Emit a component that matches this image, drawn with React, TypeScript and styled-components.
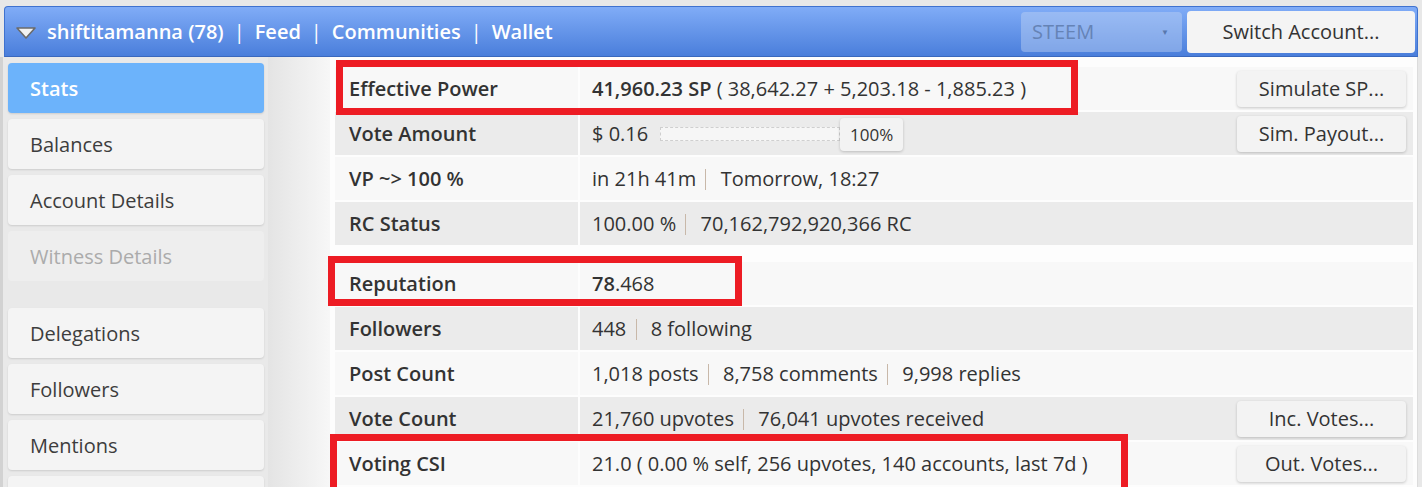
import styled, { createGlobalStyle } from 'styled-components'

const GlobalStyle = createGlobalStyle`
  html, body {
    margin: 0;
    padding: 0;
    background: #e8e8e8;
    font-family: "Open Sans", "Liberation Sans", sans-serif;
  }
  * { box-sizing: border-box; }
`

type StatRow = {
  label: string
  value: React.ReactNode
  action?: string
}

const navLinks = ['Feed', 'Communities', 'Wallet']

const menu = [
  { label: 'Stats', active: true },
  { label: 'Balances' },
  { label: 'Account Details' },
  { label: 'Witness Details', disabled: true },
  { spacer: true, label: '' },
  { label: 'Delegations' },
  { label: 'Followers' },
  { label: 'Mentions' },
  { label: '' },
]

function Sep() {
  return <Pipe />
}

function getTopRows(): StatRow[] {
  return [
    {
      label: 'Effective Power',
      value: (
        <span>
          <Strong>41,960.23 SP</Strong> ( 38,642.27 + 5,203.18 - 1,885.23 )
        </span>
      ),
      action: 'Simulate SP...',
    },
    {
      label: 'Vote Amount',
      value: (
        <VoteWrap>
          <span>$ 0.16</span>
          <Track>
            <Handle>100%</Handle>
          </Track>
        </VoteWrap>
      ),
      action: 'Sim. Payout...',
    },
    {
      label: 'VP ~> 100 %',
      value: (
        <span>
          in 21h 41m <Sep /> Tomorrow, 18:27
        </span>
      ),
    },
    {
      label: 'RC Status',
      value: (
        <span>
          100.00 % <Sep /> 70,162,792,920,366 RC
        </span>
      ),
    },
  ]
}

function getBottomRows(): StatRow[] {
  return [
    {
      label: 'Reputation',
      value: (
        <span>
          <Strong>78</Strong>.468
        </span>
      ),
    },
    {
      label: 'Followers',
      value: (
        <span>
          448 <Sep /> 8 following
        </span>
      ),
    },
    {
      label: 'Post Count',
      value: (
        <span>
          1,018 posts <Sep /> 8,758 comments <Sep /> 9,998 replies
        </span>
      ),
    },
    {
      label: 'Vote Count',
      value: (
        <span>
          21,760 upvotes <Sep /> 76,041 upvotes received
        </span>
      ),
      action: 'Inc. Votes...',
    },
    {
      label: 'Voting CSI',
      value: <span>21.0 ( 0.00 % self, 256 upvotes, 140 accounts, last 7d )</span>,
      action: 'Out. Votes...',
    },
  ]
}

function Rows({ rows }: { rows: StatRow[] }) {
  return (
    <>
      {rows.map((row, i) => (
        <Row key={row.label}>
          <LabelCell $alt={i % 2 === 1}>{row.label}</LabelCell>
          <ValueCell $alt={i % 2 === 1}>
            {row.value}
            {row.action && <ActionButton type="button">{row.action}</ActionButton>}
          </ValueCell>
        </Row>
      ))}
    </>
  )
}

export default function App() {
  return (
    <Page>
      <GlobalStyle />
      <Header>
        <Caret width="22" height="14" viewBox="0 0 22 14">
          <path d="M2 2 H20 L11 12 Z" fill="#f2f2f2" stroke="#6b6b6b" strokeWidth="1.6" strokeLinejoin="round" />
        </Caret>
        <NavLink>shiftitamanna (78)</NavLink>
        {navLinks.map((link) => (
          <NavItem key={link}>
            <NavPipe>|</NavPipe>
            <NavLink>{link}</NavLink>
          </NavItem>
        ))}
        <ChainSelect>
          <span>STEEM</span>
          <SelectArrow>▼</SelectArrow>
        </ChainSelect>
        <SwitchButton type="button">Switch Account...</SwitchButton>
      </Header>
      <Body>
        <Sidebar>
          {menu.map((item, i) =>
            item.spacer ? (
              <MenuSpacer key={i} />
            ) : (
              <MenuItem key={i} $active={item.active} $disabled={item.disabled}>
                {item.label}
              </MenuItem>
            ),
          )}
        </Sidebar>
        <Main>
          <Table>
            <Rows rows={getTopRows()} />
            <Spacer />
            <Rows rows={getBottomRows()} />
          </Table>
        </Main>
      </Body>
      <Marker $left={336} $top={60} $width={742} $height={55} />
      <Marker $left={328} $top={256} $width={414} $height={50} />
      <Marker $left={330} $top={434} $width={798} $height={60} />
    </Page>
  )
}

const Page = styled.div`
  position: relative;
  width: 1422px;
  height: 487px;
  overflow: hidden;
  padding-top: 6px;
  background: #e8e8e8;
`

const Header = styled.div`
  display: flex;
  align-items: center;
  height: 51px;
  margin: 0 4px;
  padding: 0 2px 0 10px;
  border: 1px solid #3f72cf;
  border-bottom-color: #3a68bd;
  border-radius: 4px 4px 0 0;
  background: linear-gradient(#80acf7, #4a7edb);
  color: #ffffff;
  font-size: 20px;
  font-weight: 600;
`

const Caret = styled.svg`
  flex: none;
  margin-right: 10px;
  margin-top: 2px;
`

const NavItem = styled.span`
  display: inline-flex;
  align-items: center;
`

const NavLink = styled.span`
  color: #ffffff;
`

const NavPipe = styled.span`
  margin: 0 10px;
  font-weight: 400;
`

const ChainSelect = styled.div`
  display: flex;
  align-items: center;
  justify-content: space-between;
  width: 161px;
  height: 40px;
  margin-left: auto;
  padding: 0 13px 0 11px;
  border-radius: 4px;
  background: rgba(190, 210, 245, 0.45);
  color: #6583b6;
  font-weight: 400;
`

const SelectArrow = styled.span`
  font-size: 8px;
  color: #5877ad;
`

const SwitchButton = styled.button`
  width: 228px;
  height: 42px;
  margin-left: 5px;
  border: 0;
  border-radius: 4px;
  background: #f4f4f4;
  color: #333333;
  font: inherit;
  font-weight: 400;
  font-size: 20px;
`

const Body = styled.div`
  display: grid;
  grid-template-columns: 268px 1fr;
  width: 1418px;
  height: 430px;
`

const Sidebar = styled.div`
  display: flex;
  flex-direction: column;
  gap: 6px;
  padding: 6px 4px 0 5px;
  border-left: 3px solid #d2d2d2;
  background: #e9e9e9;
`

const MenuItem = styled.div<{ $active?: boolean; $disabled?: boolean }>`
  flex: none;
  display: flex;
  align-items: center;
  height: 50px;
  padding-left: 22px;
  border-radius: 4px;
  background: ${(p) => (p.$active ? '#6cb3fb' : p.$disabled ? '#eeeeee' : '#f4f4f4')};
  box-shadow: ${(p) => (p.$disabled ? 'none' : '0 1px 2px rgba(0, 0, 0, 0.12)')};
  color: ${(p) => (p.$active ? '#ffffff' : p.$disabled ? '#ababab' : '#3d3d3d')};
  font-size: 20px;
  font-weight: ${(p) => (p.$active ? 600 : 400)};
`

const MenuSpacer = styled.div`
  flex: none;
  height: 15px;
`

const Main = styled.div`
  padding: 10px 4px 0 67px;
  background: linear-gradient(90deg, #e4e4e4 0, #f7f7f7 62px, #fdfdfd 62px);
  border-right: 1px solid #dcdcdc;
`

const Table = styled.div`
  display: flex;
  flex-direction: column;
  gap: 2px;
  color: #333333;
  font-size: 20px;
`

const Row = styled.div`
  display: grid;
  grid-template-columns: 243px 1fr;
  gap: 2px;
  height: 43px;
`

const LabelCell = styled.div<{ $alt?: boolean }>`
  display: flex;
  align-items: center;
  padding-left: 14px;
  background: ${(p) => (p.$alt ? '#ebebeb' : '#f8f8f8')};
  font-weight: 600;
`

const ValueCell = styled.div<{ $alt?: boolean }>`
  display: flex;
  align-items: center;
  justify-content: space-between;
  padding: 0 7px 0 12px;
  background: ${(p) => (p.$alt ? '#ebebeb' : '#f8f8f8')};
  white-space: nowrap;
`

const Strong = styled.span`
  font-weight: 600;
`

const Spacer = styled.div`
  height: 13px;
`

const Pipe = styled.span`
  display: inline-block;
  width: 1px;
  height: 21px;
  margin: 0 9px 0 4px;
  background: #c8b8a9;
  vertical-align: -4px;
`

const VoteWrap = styled.span`
  display: inline-flex;
  align-items: center;
`

const Track = styled.span`
  position: relative;
  display: inline-block;
  width: 180px;
  height: 14px;
  margin-left: 12px;
  border: 1px dashed #cfcfcf;
  background: #f6f6f6;
`

const Handle = styled.span`
  position: absolute;
  left: 179px;
  top: -10px;
  display: flex;
  align-items: center;
  justify-content: center;
  width: 63px;
  height: 33px;
  border-radius: 4px;
  background: #f3f3f3;
  box-shadow: 0 1px 3px rgba(0, 0, 0, 0.2);
  font-size: 17px;
`

const ActionButton = styled.button`
  width: 169px;
  height: 36px;
  border: 0;
  border-radius: 4px;
  background: #f3f3f3;
  box-shadow: 0 1px 3px rgba(0, 0, 0, 0.2);
  color: #333333;
  font: inherit;
  font-size: 20px;
`

const Marker = styled.div<{ $left: number; $top: number; $width: number; $height: number }>`
  position: absolute;
  left: ${(p) => p.$left}px;
  top: ${(p) => p.$top}px;
  width: ${(p) => p.$width}px;
  height: ${(p) => p.$height}px;
  border: 7px solid #ed1c24;
  pointer-events: none;
`
